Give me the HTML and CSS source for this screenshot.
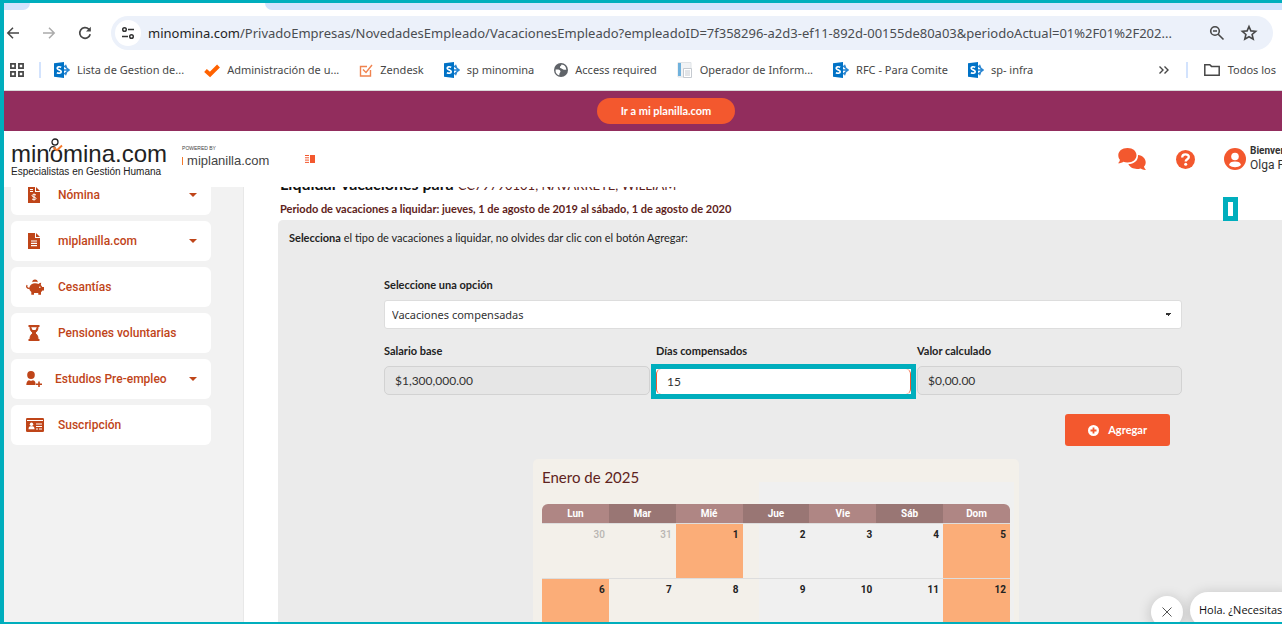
FILE: index.html
```html
<!DOCTYPE html>
<html lang="es">
<head>
<meta charset="utf-8">
<title>minomina.com</title>
<link rel="stylesheet" href="styles.css">
</head>
<body>
<svg class="defs" aria-hidden="true">
  <symbol id="sp" viewBox="0 0 16 16">
    <path d="M9 3.200 15.200 8 9 12.800M9 8h6M11.500 2.800l2 5.200-2 5.200" fill="none" stroke="#2a86d1" stroke-width="1.300"/>
    <path d="M0 1.300 10 0v16L0 14.700z" fill="#0072c6"/>
    <path d="M7.200 5.300C5.500 4.400 3.200 4.600 3.200 6.200c0 1.900 4 1.400 4 3.500 0 1.800-2.500 1.900-4.300 1" fill="none" stroke="#fff" stroke-width="1.700"/>
  </symbol>
</svg>
<div class="frame">
  <div class="tabstrip"><span class="before"></span><span class="after"></span></div>
  <div class="toolbar">
    <button class="icon-btn" aria-label="Atrás"><svg width="16" height="16" viewBox="0 0 16 16" fill="none" stroke="#474747" stroke-width="1.500"><path d="M14 8H3M8 2.800 2.800 8 8 13.200"/></svg></button>
    <button class="icon-btn" aria-label="Adelante"><svg width="16" height="16" viewBox="0 0 16 16" fill="none" stroke="#ababab" stroke-width="1.500"><path d="M2 8h11M8 2.800 13.200 8 8 13.200"/></svg></button>
    <button class="icon-btn" aria-label="Recargar"><svg width="16" height="16" viewBox="0 0 16 16" fill="none" stroke="#474747" stroke-width="1.700"><path d="M13.200 9.200A5.300 5.300 0 1 1 11.800 4.200L13 5.500"/><path d="M13.800 1.800v4.800H9z" fill="#474747" stroke="none"/></svg></button>
    <div class="omnibox">
      <button class="site-info" aria-label="Información del sitio"><svg width="16" height="16" viewBox="0 0 16 16" fill="none" stroke="#333" stroke-width="1.500"><circle cx="4.500" cy="4.500" r="1.800"/><path d="M8 4.500h6M2 11.500h6"/><circle cx="11.500" cy="11.500" r="1.800"/></svg></button>
      <p class="url"><span class="host">minomina.com</span>/PrivadoEmpresas/NovedadesEmpleado/VacacionesEmpleado?empleadoID=7f358296-a2d3-ef11-892d-00155de80a03&amp;periodoActual=01%2F01%2F202...</p>
      <button class="icon-btn" aria-label="Zoom"><svg width="16" height="16" viewBox="0 0 16 16" fill="none" stroke="#474747" stroke-width="1.600"><circle cx="6" cy="6" r="4.300"/><path d="M4 6h4M9.200 9.200 14.500 14.500"/></svg></button>
      <button class="icon-btn" aria-label="Favorito"><svg width="18" height="18" viewBox="0 0 18 18" fill="none" stroke="#474747" stroke-width="1.600"><path d="m9 2.500 1.900 4.400 4.800.4-3.600 3.200 1.100 4.700L9 12.700l-4.200 2.500 1.100-4.700-3.600-3.200 4.800-.4z"/></svg></button>
    </div>
  </div>
  <nav class="bookmarks" aria-label="Marcadores">
    <button class="apps" aria-label="Aplicaciones"><svg width="16" height="16" viewBox="0 0 16 16" fill="none" stroke="#474747" stroke-width="1.700"><path d="M1.900 1.900h4.200v4.200H1.900zM9.900 1.900h4.200v4.200H9.900zM1.900 9.900h4.200v4.200H1.900zM9.900 9.900h4.200v4.200H9.900z"/></svg></button>
    <span class="sep"></span>
    <div class="marks">
      <a href="#"><svg width="16" height="16"><use href="#sp"/></svg>Lista de Gestion de...</a>
      <a href="#"><svg width="16" height="16" viewBox="0 0 16 16"><path d="m1.500 8.500 4.500 4L14.500 4" fill="none" stroke="#ff6200" stroke-width="4"/></svg>Administración de u...</a>
      <a href="#"><svg width="14" height="14" viewBox="0 0 14 14" fill="none" stroke="#f0834f" stroke-width="1.400"><path d="M8 3.500H1.500v9.500h10V7M4 6.500l3 3L13 2"/></svg>Zendesk</a>
      <a href="#"><svg width="16" height="16"><use href="#sp"/></svg>sp minomina</a>
      <a href="#"><svg width="14" height="14" viewBox="0 0 14 14"><circle cx="7" cy="7" r="7" fill="#5f6368"/><path d="M1.600 6.500c2 0 4.200-.3 4.800 1.500.4 1.500-1 1.700-1 3.200l-.2 1.200A5.600 5.600 0 0 1 1.600 6.500zM7.500 1.600c-.3 1.500-1.500 1.500-1.600 2.600 0 1.300 2 1 2.900 2 .8.800 2 .600 3.500.600A5.600 5.600 0 0 0 7.500 1.600z" fill="#fff"/></svg>Access required</a>
      <a href="#"><svg width="16" height="16" viewBox="0 0 16 16"><path d="M1 .5h13V15H1z" fill="#f1f3f5" stroke="#dfe3e6"/><path d="M1 1h3v13H1z" fill="#6fb1dc"/><path d="M6.500 6.500h8v9h-8z" fill="#fff" stroke="#c5cad0"/><path d="M8 9h5M8 11h5M8 13h5" stroke="#c5cad0"/></svg>Operador de Inform...</a>
      <a href="#"><svg width="16" height="16"><use href="#sp"/></svg>RFC - Para Comite</a>
      <a href="#"><svg width="16" height="16"><use href="#sp"/></svg>sp- infra</a>
    </div>
    <button class="more" aria-label="Más marcadores"><svg width="12" height="10" viewBox="0 0 12 10" fill="none" stroke="#474747" stroke-width="1.400"><path d="m1.500 1.500 3.500 3.500-3.500 3.500M6.500 1.500 10 5 6.500 8.500"/></svg></button>
    <span class="sep"></span>
    <a class="all" href="#"><svg width="16" height="14" viewBox="0 0 16 14" fill="none" stroke="#474747" stroke-width="1.500"><path d="M.8 12.300V1.700h5L7.500 3.400h7.700v8.900z"/></svg>Todos los</a>
  </nav>
  <div class="promo"><a href="#">Ir a mi planilla.com</a></div>
  <header class="site">
    <a class="logo" href="#">
      <span class="brand">minomina.com</span>
      <span class="tagline">Especialistas en Gestión Humana</span>
      <svg class="figure" width="22" height="18" viewBox="0 0 22 18" fill="none" stroke="#222" stroke-width="1.300"><circle cx="9" cy="4" r="3"/><path d="M3.500 13.500C3.500 9.500 6 7.500 9.500 9.500"/><path d="m7.500 9.500 3.500 2.700 5-4.700" stroke="#f5792b" stroke-width="1.900"/></svg>
    </a>
    <a class="partner" href="#"><small>POWERED BY</small><span><i></i>miplanilla.com</span></a>
    <button class="toggle" aria-label="Contraer menú"><svg width="10" height="8" viewBox="0 0 10 8"><path d="M0 .5h4M0 2.800h4M0 5.100h4M0 7.400h4" stroke="#f3582e"/><path d="M5 0h5v8H5z" fill="#f3582e"/></svg></button>
    <div class="tools">
      <button class="tool" aria-label="Chat"><svg width="28" height="22" viewBox="0 0 28 22" fill="#f3582e"><path d="M9.500 0C15 0 18.500 3.200 18.500 7.300S15 14.500 9.500 14.500c-1.500 0-3-.3-4.200-.8C4 14.700 2 15.300 0 15.200c1-.9 1.800-2.200 1.900-3.500C.8 10.500.3 9 .3 7.300.3 3.200 4 0 9.500 0z"/><path d="M20 7c4.600.6 7.700 3.600 7.700 7.200 0 1.700-.6 3.200-1.700 4.400.2 1.300 1 2.500 2 3.400-2 .1-4-.6-5.400-1.500-5 1.500-10.500-.2-12.200-4.400C16 16 20.400 12.500 20 7z"/></svg></button>
      <button class="tool" aria-label="Ayuda"><svg width="19" height="19" viewBox="0 0 20 20"><circle cx="10" cy="10" r="10" fill="#f3582e"/><path d="M6.500 7.800C6.500 3.400 13.500 3.600 13.500 7.400c0 2.400-3.300 2.300-3.300 4.600" fill="none" stroke="#fff" stroke-width="2.400"/><circle cx="10.200" cy="15" r="1.600" fill="#fff"/></svg></button>
      <button class="tool user" aria-label="Cuenta"><svg width="22" height="22" viewBox="0 0 22 22"><circle cx="11" cy="11" r="11" fill="#f3582e"/><circle cx="11" cy="8.500" r="3.800" fill="#fff"/><path d="M5 17c.5-2.500 2.500-3.500 6-3.500s5.500 1 6 3.500c-3.300 3-8.700 3-12 0z" fill="#fff"/></svg></button>
      <p class="who"><b>Bienvenido</b><span>Olga F</span></p>
    </div>
  </header>
  <div class="body">
    <nav class="side" aria-label="Menú principal">
      <a href="#"><svg width="12" height="16" viewBox="0 0 12 16"><path d="M0 0h7v5h5v11H0z" fill="#bf4519"/><path d="M8 0l4 4H8z" fill="#bf4519"/><path d="M2 2.500h3M2 4.500h3" stroke="#fff"/><path d="M8 8C6.500 7 4 7.400 4 8.800c0 1.500 4 .9 4 2.600 0 1.400-2.600 1.600-4 .6M6 6.500v7" fill="none" stroke="#fff"/></svg><span>Nómina</span><i class="caret"></i></a>
      <a href="#"><svg width="12" height="16" viewBox="0 0 12 16"><path d="M0 0h7v5h5v11H0z" fill="#bf4519"/><path d="M8 0l4 4H8z" fill="#bf4519"/><path d="M3 8h6M3 10.300h6M3 12.600h6" stroke="#fff" stroke-width="1.200"/></svg><span>miplanilla.com</span><i class="caret"></i></a>
      <a href="#"><svg width="18" height="16" viewBox="0 0 18 16" fill="#bf4519"><path d="M6.300 3.200a2.700 2.700 0 0 1 5.400 0c-1.800-.5-3.600-.5-5.400 0z"/><path d="M3.500 8C4.200 5.500 6.500 4.200 9 4.200c1.500 0 2.600.2 3.500.7.700-.8 1.600-1.200 2.700-1.200L14.800 6c.7.600 1.100 1.200 1.400 2H18v3.500h-1.600c-.4.700-.9 1.200-1.400 1.600v2.700h-2.700V14H8v1.800H5.300v-2.900C4 12 3.200 10.500 3.300 9z"/><path d="M3.800 9.300C1 9.800 0 7.500 1.300 6.300" fill="none" stroke="#bf4519" stroke-width="1.300"/><circle cx="13.800" cy="8.300" r=".8" fill="#fff"/></svg><span>Cesantías</span></a>
      <a href="#"><svg width="12" height="16" viewBox="0 0 12 16"><path d="M.5 1h11M.5 15h11" stroke="#bf4519" stroke-width="2"/><path d="M2 2c0 3 1 4.500 3 6-2 1.500-3 3-3 6h8c0-3-1-4.500-3-6 2-1.500 3-3 3-6" fill="#bf4519" stroke="#bf4519"/><path d="M3.200 2.300h5.600L7.500 5h-3z" fill="#fff"/></svg><span>Pensiones voluntarias</span></a>
      <a href="#" class="wide"><svg width="16" height="16" viewBox="0 0 16 16" fill="#bf4519"><ellipse cx="5" cy="4" rx="3.800" ry="4"/><path d="M.3 14c0-3 1.500-4.800 3-4.800 1 .8 2.400.8 3.400 0 1.500 0 2.600 1.300 2.800 3V14z"/><path d="M10 13.200h6M13 10.400V16" stroke="#bf4519" stroke-width="1.600"/></svg><span>Estudios Pre-empleo</span><i class="caret"></i></a>
      <a href="#"><svg width="18" height="14" viewBox="0 0 18 14"><rect width="18" height="14" rx="1.300" fill="#bf4519"/><path d="M1 2.500h16M10 6h6M10 8.500h6M10 11h2M13 11h3" stroke="#fff"/><circle cx="5.500" cy="6.200" r="1.700" fill="#fff"/><path d="M2.500 11.200c0-2.500 1-3 3-3s3 .5 3 3z" fill="#fff"/></svg><span>Suscripción</span></a>
    </nav>
    <main class="content">
      <h1>Liquidar vacaciones para <span>CC79790101, NAVARRETE, WILLIAM</span></h1>
      <h2>Periodo de vacaciones a liquidar: jueves, 1 de agosto de 2019 al sábado, 1 de agosto de 2020</h2>
      <section class="panel">
        <p class="hint"><b>Selecciona</b> el tipo de vacaciones a liquidar, no olvides dar clic con el botón Agregar:</p>
        <form class="form">
          <div class="field full">
            <label for="tipo">Seleccione una opción</label>
            <select id="tipo"><option>Vacaciones compensadas</option></select>
          </div>
          <div class="field">
            <label for="salario">Salario base</label>
            <input id="salario" value="$1,300,000.00" readonly>
          </div>
          <div class="field">
            <label for="dias">Días compensados</label>
            <div class="marked"><input id="dias" value="15"></div>
          </div>
          <div class="field">
            <label for="valor">Valor calculado</label>
            <input id="valor" value="$0,00.00" readonly>
          </div>
          <button type="button" class="add"><svg width="11" height="11" viewBox="0 0 11 11"><circle cx="5.500" cy="5.500" r="5.500" fill="#fff"/><path d="M2.500 5.500h6M5.500 2.500v6" stroke="#f3582e" stroke-width="1.800"/></svg>Agregar</button>
        </form>
        <div class="calendar">
          <h3>Enero de 2025</h3>
          <table>
            <thead><tr><th>Lun</th><th>Mar</th><th>Mié</th><th>Jue</th><th>Vie</th><th>Sáb</th><th>Dom</th></tr></thead>
            <tbody>
              <tr><td class="out">30</td><td class="out">31</td><td class="off">1</td><td>2</td><td>3</td><td>4</td><td class="off">5</td></tr>
              <tr><td class="off">6</td><td>7</td><td>8</td><td>9</td><td>10</td><td>11</td><td class="off">12</td></tr>
            </tbody>
          </table>
        </div>
      </section>
      <div class="callout"></div>
    </main>
  </div>
  <button class="chat-close" aria-label="Cerrar"><svg width="10" height="10" viewBox="0 0 10 10" stroke="#555" stroke-width="1"><path d="m.5.5 9 9M9.500.5l-9 9"/></svg></button>
  <div class="chat-bubble">Hola. ¿Necesitas</div>
</div>
</body>
</html>
```
FILE: styles.css
```css
* { box-sizing: border-box; }
body, h1, h2, h3, p { margin: 0; }
button { border: 0; background: none; padding: 0; font: inherit; cursor: pointer; }
a { color: inherit; text-decoration: none; }
svg { display: block; flex: none; }
.defs { position: absolute; width: 0; height: 0; }

.frame {
  position: relative;
  display: flex;
  flex-direction: column;
  height: 100vh;
  overflow: hidden;
  border: solid #00aebd;
  border-width: 3px 0 2px 4px;
  background: #fff;
  font-family: Roboto, "Liberation Sans", sans-serif;
}

/* browser bars */
.tabstrip { flex: none; display: flex; justify-content: space-between; gap: 235px; height: 7px; }
.tabstrip span { background: #d3e3fd; }
.tabstrip .before { width: 26px; border-bottom-right-radius: 7px; }
.tabstrip .after { flex: 1; border-bottom-left-radius: 7px; }
.toolbar { flex: none; display: flex; align-items: center; gap: 20px; height: 46px; padding: 0 9px 0 1px; }
.icon-btn { flex: none; }
.omnibox { flex: 1; min-width: 0; display: flex; align-items: center; gap: 15px; height: 34px; margin-left: -2px; padding: 0 15px 0 4px; border-radius: 17px; background: #ecf1fa; }
.site-info { display: grid; place-items: center; flex: none; width: 26px; height: 26px; border-radius: 50%; background: #fff; margin-right: -8px; }
.url { flex: 1; min-width: 0; overflow: hidden; white-space: nowrap; font: 13px/20px "Noto Sans", sans-serif; color: #4a4d51; }
.host { color: #1f1f1f; }
.bookmarks { flex: none; display: flex; align-items: center; height: 34px; padding: 0 0 6px 5px; font: 11px/16px "Noto Sans", sans-serif; color: #474747; white-space: nowrap; }
.sep { flex: none; width: 2px; height: 16px; background: #d3e3fd; }
.apps { margin-right: 14px; }
.marks { flex: 1; min-width: 0; display: flex; gap: 20px; margin-left: 13px; }
.marks a, .all { display: flex; align-items: center; gap: 7px; }
.more { margin-right: 16px; }
.all { margin-left: 16px; padding-right: 6px; gap: 8px; }

/* site header */
.promo { flex: none; display: flex; justify-content: center; align-items: center; height: 41px; border-top: 1px solid #d9d9d9; background: #922d5d; }
.promo a { padding: 0 24px; margin-left: 46px; border-radius: 13px; background: #f3582e; color: #fff; font: bold 11px/26px Lato, sans-serif; }
.site { position: relative; z-index: 1; flex: none; display: flex; align-items: center; height: 56px; padding-left: 7px; background: #fff; }
.logo { position: relative; display: flex; flex-direction: column; font-family: "Liberation Sans", sans-serif; color: #222; }
.brand { font-size: 24px; line-height: 26px; }
.tagline { font-size: 10px; line-height: 10px; }
.figure { position: absolute; left: 35px; top: -3px; }
.partner { display: flex; flex-direction: column; margin: -3px 0 0 15px; font: 13px/20px "Liberation Sans", sans-serif; color: #444; }
.partner small { font-size: 5px; line-height: 6px; }
.partner i { display: inline-block; width: 1px; height: 8px; margin-right: 4px; background: #f5792b; }
.toggle { margin-left: 36px; }
.tools { display: flex; align-items: center; margin-left: auto; }
.tool { margin-right: 30px; }
.tool + .tool { margin-right: 29px; }
.tools .user { margin-right: 4px; }
.who { display: flex; flex-direction: column; width: 32px; overflow: hidden; white-space: nowrap; color: #333; font-size: 12px; line-height: 15px; margin-top: -2px; }
.who b { font-size: 10px; }

/* layout under the header */
.body { flex: 1; min-height: 0; display: flex; }
.side { flex: none; display: flex; flex-direction: column; gap: 6px; width: 240px; padding: 0 32px 0 7px; border-right: 1px solid #e8e8e8; background: #f2f2f2; }
.side a { display: flex; align-items: center; height: 40px; padding: 0 14px 0 15px; border-radius: 6px; background: #fff; color: #bf4519; font-size: 12px; font-weight: 500; }
.side a:first-child { margin-top: -12px; }
.side span { flex: 1; }
.side svg[width="12"] { margin: 0 18px 0 2px; }
.side svg[width="18"] { margin-right: 14px; }
.side .wide svg { margin-right: 13px; }
.caret { border: solid transparent; border-width: 4px 4px 0; border-top-color: #bf4519; }

.content { position: relative; flex: 1; min-width: 0; padding-left: 34px; font-family: Lato, sans-serif; color: #222; }
h1 { margin: -13px 0 0 2px; font-size: 16px; line-height: 20px; color: #111; }
h1 span { color: #5e2320; font-size: 13px; font-weight: 400; }
h2 { margin: 5px 0 0 2px; font-size: 11px; line-height: 18px; color: #5e2320; }
.panel { margin-top: 2px; padding: 9px 100px 0 11px; border-radius: 5px 0 0; background: #ebebeb; }
.hint { font-size: 11px; line-height: 18px; }
.form { display: grid; grid-template-columns: 266fr 255fr 265fr; column-gap: 6px; row-gap: 13px; margin: 29px 0 0 95px; }
.field { display: flex; flex-direction: column; gap: 6px; min-width: 0; }
.full { grid-column: 1 / -1; }
label { font-size: 11px; line-height: 18px; font-weight: 700; }
input, select { width: 100%; height: 29px; border: 1px solid #d2d2d2; border-radius: 5px; background: #e6e6e6; padding: 0 10px; font: 12px Lato, sans-serif; color: #333; }
select {
  appearance: none;
  padding: 0 7px;
  border-color: #ddd;
  border-radius: 3px;
  font: 11px "Noto Sans", sans-serif;
  background-color: #fff;
  background-image: linear-gradient(to top right, transparent 50%, #333 50%), linear-gradient(to top left, transparent 50%, #333 50%);
  background-position: right 13px top 12px, right 10px top 12px;
  background-size: 3px 3px;
  background-repeat: no-repeat;
}
.marked { height: 25px; margin: 3px 0 1px; outline: 5px solid #00aebd; background: #fff; }
.marked input { display: block; height: 25px; border-color: #f3582e; border-width: 0 1px; background: #fff; }
.add { grid-column: 3; justify-self: end; display: flex; align-items: center; gap: 9px; height: 32px; margin: 6px 12px 0 0; padding: 0 23px; border-radius: 3px; background: #f3582e; color: #fff; font: bold 11px/16px Lato, sans-serif; }
.calendar { width: 486px; margin: 13px 0 0 244px; padding: 8px 9px 0; border-radius: 5px 5px 0 0; background: linear-gradient(#f0f0f0, #f0f0f0) 226px 23px / 255px 100% no-repeat #f3f0ea; }
h3 { font-size: 15px; line-height: 20px; font-weight: 400; color: #5e2320; }
table { width: 100%; margin-top: 17px; table-layout: fixed; border-collapse: separate; border-spacing: 0; font-family: Roboto, sans-serif; font-size: 10px; }
th { height: 19px; padding: 0; background: #af8684; color: #fff; line-height: 12px; }
th:nth-child(even) { background: #997674; }
th:first-child { border-top-left-radius: 6px; }
th:last-child { border-top-right-radius: 6px; }
td { height: 55px; padding: 5px 4px 0 0; border-top: 1px solid #ddd; text-align: right; vertical-align: top; font-weight: 700; line-height: 12px; }
.out { color: #b8b5b2; font-weight: 500; }
.off { background: #fbad78; }

/* overlays */
.callout { position: absolute; right: 44px; top: 10px; width: 15px; height: 24px; border: 5px solid #00aebd; background: #fff; }
.chat-close { position: absolute; right: 99px; bottom: -6px; display: grid; place-items: center; width: 32px; height: 32px; border-radius: 50%; background: #fff; box-shadow: 0 2px 14px rgba(0, 0, 0, .2); }
.chat-bubble { position: absolute; right: -18px; bottom: -6px; width: 110px; height: 36px; padding-left: 9px; border-radius: 18px; background: #fff; box-shadow: 0 2px 14px rgba(0, 0, 0, .2); font: 11px/36px "Open Sans", sans-serif; color: #111; white-space: nowrap; }
```
